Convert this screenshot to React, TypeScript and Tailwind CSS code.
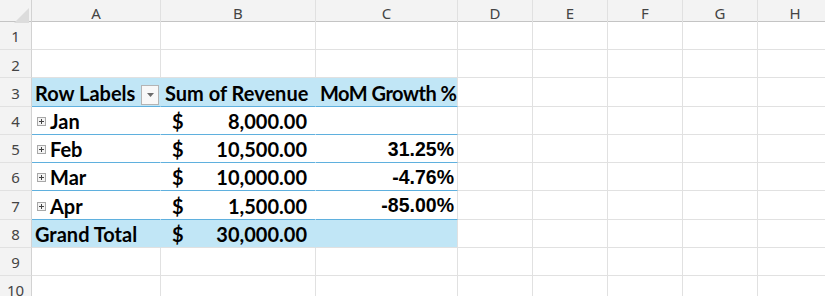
import * as React from "react"

const cols = ["A", "B", "C", "D", "E", "F", "G", "H"]

type Band = "head" | "body" | "total" | null

interface RowDef {
  band: Band
  a?: string
  b?: string
  c?: string
  expand?: boolean
}

const rows: RowDef[] = [
  { band: null },
  { band: null },
  { band: "head", a: "Row Labels", b: "Sum of Revenue", c: "MoM Growth %" },
  { band: "body", a: "Jan", b: "8,000.00", c: "", expand: true },
  { band: "body", a: "Feb", b: "10,500.00", c: "31.25%", expand: true },
  { band: "body", a: "Mar", b: "10,000.00", c: "-4.76%", expand: true },
  { band: "body", a: "Apr", b: "1,500.00", c: "-85.00%", expand: true },
  { band: "total", a: "Grand Total", b: "30,000.00", c: "" },
  { band: null },
  { band: null },
]

const gridCols = "grid grid-cols-[32px_129px_155px_142px_75px_75px_75px_75px_75px]"
const body = "font-['Lato',sans-serif] font-bold text-[20px] text-black leading-none whitespace-nowrap"

function ExpandIcon() {
  return (
    <svg width="9" height="9" viewBox="0 0 9 9" className="mr-[4px] ml-[2px] mb-[5px] shrink-0">
      <rect x="0.5" y="0.5" width="8" height="8" fill="#f4f4f4" stroke="#a8a8a8" />
      <path d="M2 4.5h5M4.5 2v5" stroke="#444" strokeWidth="1" />
    </svg>
  )
}

function FilterButton() {
  return (
    <div className="ml-auto mr-[1px] mb-[-2px] flex h-[20px] w-[18px] shrink-0 items-center justify-center border border-[#b4b4b4] bg-[#f8f8f8]">
      <svg width="7" height="4" viewBox="0 0 7 4">
        <path d="M0 0h7L3.5 4z" fill="#6b6b6b" />
      </svg>
    </div>
  )
}

export default function App() {
  return (
    <div className="h-[296px] w-[825px] overflow-hidden bg-white font-['Noto_Sans',sans-serif]">
      {/* column headers */}
      <div className={`${gridCols} h-[22px] bg-[#f3f3f3] border-b border-[#c4c4c4]`}>
        <div className="relative border-r border-[#d2d2d2]">
          <svg className="absolute right-[2px] bottom-[2px]" width="15" height="15" viewBox="0 0 15 15">
            <path d="M15 0V15H0z" fill="#dcdcdc" />
          </svg>
        </div>
        {cols.map((c) => (
          <div
            key={c}
            className="flex items-center justify-center border-r border-[#e0e0e0] pt-[2px] text-[15px] text-[#444]"
          >
            {c}
          </div>
        ))}
        <div className="border-r border-[#e0e0e0]" />
      </div>

      {rows.map((r, i) => {
        const band = r.band
        const filled = band === "head" || band === "total"
        const bg = filled ? "bg-[#c1e6f6]" : "bg-white"
        const bottom =
          band === "head" || band === "body" ? "border-[#5fb0de]" : "border-[#e1e1e1]"
        const inner = filled ? "border-r-[#c1e6f6]" : "border-r-white"
        return (
          <div key={i} className={`${gridCols} h-[28.22px]`}>
            <div className="flex items-center justify-center border-r border-b border-[#d2d2d2] border-b-[#e1e1e1] bg-[#f3f3f3] pt-[2px] text-[15px] text-[#444]">
              {i + 1}
            </div>
            {band ? (
              <>
                <div className={`flex min-w-0 items-end border-r border-b ${bottom} ${inner} ${bg} pb-[3px] pl-[3px] ${body}`}>
                  {r.expand && <ExpandIcon />}
                  <span>{r.a}</span>
                  {band === "head" && <FilterButton />}
                </div>
                <div className={`flex min-w-0 items-end border-r border-b ${bottom} ${inner} ${bg} pb-[3px] ${body}`}>
                  {band === "head" ? (
                    <span className="pl-[4px]">{r.b}</span>
                  ) : (
                    <>
                      <span className="pl-[11px]">$</span>
                      <span className="ml-auto pr-[8px]">{r.b}</span>
                    </>
                  )}
                </div>
                <div className={`flex min-w-0 items-end border-r border-b ${bottom} border-r-[#e1e1e1] ${bg} pb-[3px]`}>
                  {band === "head" ? (
                    <span className={`pl-[4px] tracking-[-0.5px] ${body}`}>{r.c}</span>
                  ) : (
                    <span className="ml-auto whitespace-nowrap pr-[3px] font-['Liberation_Sans',sans-serif] text-[19.5px] font-bold leading-none text-black">
                      {r.c}
                    </span>
                  )}
                </div>
              </>
            ) : (
              <>
                <div className="border-r border-b border-[#e1e1e1]" />
                <div className="border-r border-b border-[#e1e1e1]" />
                <div className="border-r border-b border-[#e1e1e1]" />
              </>
            )}
            {[0, 1, 2, 3, 4].map((k) => (
              <div key={k} className="border-r border-b border-[#e1e1e1]" />
            ))}
          </div>
        )
      })}
    </div>
  )
}
